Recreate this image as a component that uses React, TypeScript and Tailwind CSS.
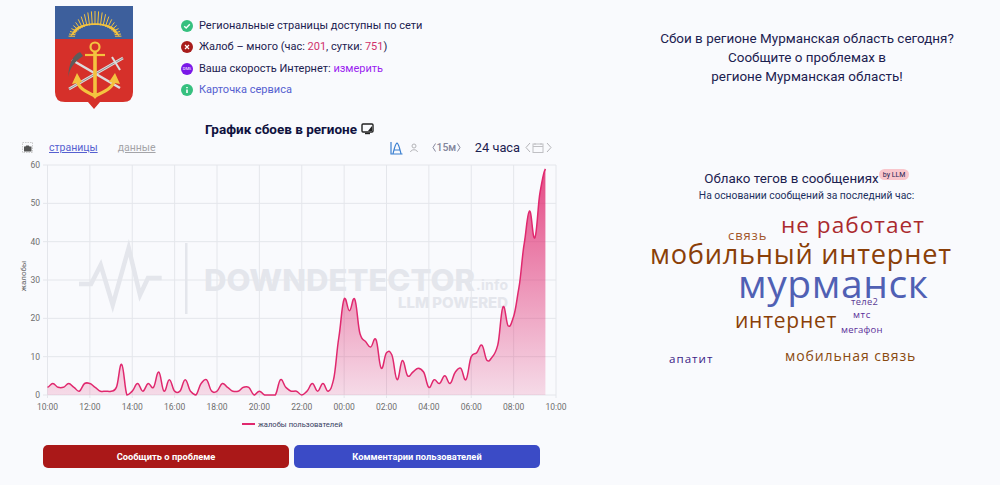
import React from "react";

const data = [
  2, 3, 2, 2, 3, 2, 1, 3, 3, 2, 1, 1, 1, 2, 8, 0, 1, 3, 1, 3, 2, 6, 1, 4, 1, 1, 4, 1, 0, 3, 4, 1, 1, 3, 2, 1, 1, 2, 2, 0, 1, 0, 0, 0,
  4, 2, 1, 1, 0, 1, 3, 1, 3, 1, 4, 15, 25, 22, 25, 16, 14, 12.5, 14.5, 7, 11, 10.5, 4, 9, 5, 6, 7, 6, 2, 4, 3, 5, 3, 6, 7, 4, 10, 11,
  13, 9, 10, 13, 23, 18, 20.5, 28, 39.5, 48, 41, 53, 59,
];

const X0 = 47.5;
const X1 = 556;
const Y0 = 395;
const YT = 165;
const px = (i: number) => X0 + (i * (X1 - X0)) / 96;
const py = (v: number) => Y0 - (v * (Y0 - YT)) / 60;

const buildLine = () => {
  let d = `M${px(0)} ${py(data[0])}`;
  for (let i = 0; i < data.length - 1; i++) {
    const p0 = data[Math.max(i - 1, 0)];
    const p1 = data[i];
    const p2 = data[i + 1];
    const p3 = data[Math.min(i + 2, data.length - 1)];
    const dx = px(1) - px(0);
    const c1 = py(p1 + (p2 - p0) / 6);
    const c2 = py(p2 - (p3 - p1) / 6);
    d += ` C${px(i) + dx / 2.4} ${Math.min(c1, py(0))} ${px(i + 1) - dx / 2.4} ${Math.min(c2, py(0))} ${px(i + 1)} ${py(p2)}`;
  }
  return d;
};

const hours = ["10:00", "12:00", "14:00", "16:00", "18:00", "20:00", "22:00", "00:00", "02:00", "04:00", "06:00", "08:00", "10:00"];

const Chart = () => {
  const line = buildLine();
  return (
    <svg width="590" height="278" viewBox="0 157 590 278" className="block">
      <defs>
        <linearGradient id="fillArea" x1="0" y1="165" x2="0" y2="395" gradientUnits="userSpaceOnUse">
          <stop offset="0" stopColor="#e0286e" stopOpacity="0.85" />
          <stop offset="1" stopColor="#e0286e" stopOpacity="0.15" />
        </linearGradient>
      </defs>

      <g>
        <path d="M79 284H91L100.7 265L112.7 305L128.7 248L140 295L148 278H161.7" fill="none" stroke="#e4e6ec" strokeWidth="4.5" />
        <rect x="185" y="243" width="2.5" height="71" fill="#e4e6ec" />
        <text x="204" y="291" fontSize="30" fontWeight="800" textLength="271" lengthAdjust="spacingAndGlyphs" fill="#e4e6ec" fontFamily="Inter, sans-serif">
          DOWNDETECTOR
        </text>
        <text x="476" y="290" fontSize="14" fontWeight="700" textLength="32" fill="#e4e6ec" fontFamily="Inter, sans-serif">
          .info
        </text>
        <text x="398" y="308" fontSize="15" fontWeight="800" textLength="110" lengthAdjust="spacingAndGlyphs" fill="#e4e6ec" fontFamily="Inter, sans-serif">
          LLM POWERED
        </text>
      </g>

      {[0, 1, 2, 3, 4, 5, 6].map((n) => (
        <g key={n}>
          <line x1={43} x2={556} y1={py(n * 10)} y2={py(n * 10)} stroke="#e4e6eb" />
          <text x={40} y={py(n * 10) + 3} textAnchor="end" fontSize="8.5" fill="#6e6e6e" fontFamily="Roboto, sans-serif">
            {n * 10}
          </text>
        </g>
      ))}
      {hours.map((h, i) => {
        const x = X0 + (i * (X1 - X0)) / 12;
        return (
          <g key={i}>
            <line x1={x} x2={x} y1={165} y2={398} stroke="#e4e6eb" />
            <text x={x} y={410} textAnchor="middle" fontSize="8.5" fill="#6e6e6e" fontFamily="Roboto, sans-serif">
              {h}
            </text>
          </g>
        );
      })}
      <text transform="translate(26 276) rotate(-90)" textAnchor="middle" fontSize="8" fill="#666" fontFamily="Roboto, sans-serif">
        жалобы
      </text>

      <path d={`${line} L${px(94)} ${Y0} L${X0} ${Y0} Z`} fill="url(#fillArea)" />
      <path d={line} fill="none" stroke="#e0286e" strokeWidth="1.5" />

      <line x1={242} x2={255} y1={424} y2={424} stroke="#e0286e" strokeWidth="2" />
      <text x={258} y={426.5} fontSize="7.6" fill="#373d5f" fontFamily="Roboto, sans-serif">
        жалобы пользователей
      </text>
    </svg>
  );
};

const Arms = () => (
  <svg width="78" height="103" viewBox="0 0 78 103" className="block">
    <path d="M0 0H78V33H0Z" fill="#3d5f9c" />
    <path d="M0 33H78V86Q78 96 68 96H45L39 103L33 96H10Q0 96 0 86Z" fill="#d6302a" />
    <g stroke="#f4c33f" strokeWidth="1">
      {Array.from({ length: 23 }).map((_, i) => {
        const a = Math.PI * (1.02 + (i * 0.96) / 22);
        const ry = 13 + 13 * Math.sin((i / 22) * Math.PI);
        return (
          <line
            key={i}
            x1={40 + 20 * Math.cos(a)}
            y1={31 + 12 * Math.sin(a)}
            x2={40 + 26.5 * Math.cos(a)}
            y2={31 + ry * Math.sin(a)}
          />
        );
      })}
    </g>
    <path d="M15 31C21 27 24 19 40 19C56 19 59 27 65 31L61 24C54 15 26 15 19 24Z" fill="#f4c33f" />
    <path d="M17 54L65 82" stroke="#dcdcdc" strokeWidth="2.6" />
    <path d="M68 52L14 83" stroke="#dcdcdc" strokeWidth="2.6" />
    <path d="M14 83L68 52" stroke="#666" strokeWidth="0.6" />
    <path d="M25 46C18 49 14 57 13 71C15 62 19 56 28 50Z" fill="#5c5c5c" />
    <path d="M57 51L65 64" stroke="#dcdcdc" strokeWidth="2" />
    <g fill="none" stroke="#f4c33f">
      <circle cx="40" cy="41" r="4.5" strokeWidth="2.2" />
      <path d="M40 46V90" strokeWidth="3.6" />
      <path d="M30 49H50" strokeWidth="2.2" />
      <path d="M22 73C23 83 32 86 40 90C48 86 58 83 60 73" strokeWidth="3.2" />
    </g>
    <path d="M22 67L17 78L27 76Z M60 67L54 76L65 78Z" fill="#f4c33f" />
    <path d="M35 87L40 93L45 87Z" fill="#f4c33f" />
  </svg>
);

const StatusRow = ({ bg, icon, children }: { bg: string; icon: React.ReactNode; children: React.ReactNode }) => (
  <div className="flex items-center h-[21.5px]">
    <span className={`w-[12px] h-[12px] rounded-full flex items-center justify-center shrink-0 ${bg}`}>{icon}</span>
    <span className="ml-[6px] text-[11px] text-[#1c2150] whitespace-nowrap">{children}</span>
  </div>
);

const cloud = [
  { t: "связь", x: 728, y: 229, s: 13, c: "text-[#a2562a]", ls: "tracking-[0.9px]" },
  { t: "не работает", x: 781, y: 214, s: 22.6, c: "text-[#ab2a2e]", ls: "tracking-[1px]" },
  { t: "мобильный интернет", x: 650, y: 240, s: 27.2, c: "text-[#8a3f08]", ls: "tracking-[0.75px]" },
  { t: "мурманск", x: 738, y: 263, s: 39, c: "text-[#5060b4]", ls: "tracking-[0.6px]" },
  { t: "теле2", x: 851, y: 297, s: 9.4, c: "text-[#5b3a94]", ls: "tracking-[0.3px]" },
  { t: "мтс", x: 853, y: 310, s: 9.5, c: "text-[#5b2f9a]", ls: "tracking-[0.6px]" },
  { t: "мегафон", x: 841, y: 325, s: 9.5, c: "text-[#5b2f9a]", ls: "tracking-[0.2px]" },
  { t: "интернет", x: 735, y: 310, s: 21, c: "text-[#8a3f08]", ls: "tracking-[0.75px]" },
  { t: "апатит", x: 669, y: 353, s: 11.6, c: "text-[#3c1d86]", ls: "tracking-[1px]" },
  { t: "мобильная связь", x: 785, y: 349, s: 14, c: "text-[#8a4a10]", ls: "tracking-[0.9px]" },
];

export default function App() {
  return (
    <div className="relative w-[1000px] h-[485px] overflow-hidden bg-[#f9fafd] flex font-['Roboto',sans-serif]">
      <div className="w-[590px] shrink-0">
        <div className="flex pl-[55px] pt-[6px] h-[110px]">
          <Arms />
          <div className="ml-[48px] pt-[9px]">
            <StatusRow
              bg="bg-[#36c07f]"
              icon={
                <svg width="8" height="8" viewBox="0 0 8 8">
                  <path d="M1.2 4.2L3.2 6L6.8 2.2" fill="none" stroke="#fff" strokeWidth="1.4" />
                </svg>
              }
            >
              Региональные страницы доступны по сети
            </StatusRow>
            <StatusRow
              bg="bg-[#a81c1c]"
              icon={
                <svg width="8" height="8" viewBox="0 0 8 8">
                  <path d="M2 2L6 6M6 2L2 6" fill="none" stroke="#fff" strokeWidth="1.2" />
                </svg>
              }
            >
              Жалоб – много (час: <span className="text-[#d0306a]">201</span>, сутки: <span className="text-[#d0306a]">751</span>)
            </StatusRow>
            <StatusRow bg="bg-[#7a18e8]" icon={<span className="text-[4px] leading-none text-white">DMS</span>}>
              Ваша скорость Интернет: <span className="text-[#9a1ef0]">измерить</span>
            </StatusRow>
            <StatusRow
              bg="bg-[#36c07f]"
              icon={
                <svg width="8" height="8" viewBox="0 0 8 8">
                  <path d="M4 1V2.3M4 3.4V7" fill="none" stroke="#fff" strokeWidth="1.6" />
                </svg>
              }
            >
              <span className="text-[#5560d0]">Карточка сервиса</span>
            </StatusRow>
          </div>
        </div>

        <div className="flex justify-center items-center pr-[11px] h-[22px] mt-[8px] text-[13.5px] font-bold text-[#10123f]">
          <span>График сбоев в регионе</span>
          <svg width="13" height="12" viewBox="0 0 13 12" className="ml-[4px]">
            <rect x="1" y="1" width="11" height="8" rx="1" fill="none" stroke="#222" strokeWidth="1.4" />
            <path d="M4 10.5H9" stroke="#222" strokeWidth="1.4" />
            <path d="M7 8L11 3V8Z" fill="#222" />
          </svg>
        </div>

        <div className="flex items-center h-[19px] mt-[-2px] pl-[22px] pr-[38px]">
          <svg width="11" height="11" viewBox="0 0 11 11">
            <rect x="0.5" y="0.5" width="10" height="10" fill="none" stroke="#aaa" strokeWidth="0.6" strokeDasharray="1.5 1" />
            <path d="M2 4.5H3.5L4.2 3.5H6.8L7.5 4.5H9.5V9.5H2Z" fill="#555" />
          </svg>
          <span className="ml-[16px] text-[10.5px] text-[#5560d0] underline">страницы</span>
          <span className="ml-[20px] text-[10.5px] text-[#a4a4a8] underline">данные</span>
          <div className="ml-auto flex items-center">
            <svg width="13" height="14" viewBox="0 0 13 14">
              <path d="M1 1V13H12.5M3 13C4 9 5 3 7 2C9 3 10 9 11 13M3.5 9H10.5" fill="none" stroke="#3a7fd0" strokeWidth="1.2" />
            </svg>
            <svg width="10" height="10" viewBox="0 0 10 10" className="ml-[6px]">
              <circle cx="5" cy="3" r="2" fill="none" stroke="#b4b4b8" />
              <path d="M1.5 9C2 6 8 6 8.5 9" fill="none" stroke="#b4b4b8" />
            </svg>
            <div className="ml-[13px] w-[29px] flex items-center justify-between">
              <svg width="4" height="9" viewBox="0 0 4 9">
                <path d="M3.5 0.5L1 4.5L3.5 8.5" fill="none" stroke="#84869c" />
              </svg>
              <span className="text-[10.5px] font-medium text-[#84869c]">15м</span>
              <svg width="4" height="9" viewBox="0 0 4 9">
                <path d="M0.5 0.5L3 4.5L0.5 8.5" fill="none" stroke="#84869c" />
              </svg>
            </div>
            <span className="ml-[14px] text-[12.8px] text-[#1c2150]">24 часа</span>
            <svg width="27" height="11" viewBox="0 0 27 11" className="ml-[5px]">
              <path d="M5 1L1 5.5L5 10M22 1L26 5.5L22 10" fill="none" stroke="#b4b4b8" strokeWidth="1" />
              <rect x="8" y="2" width="10" height="8.5" fill="none" stroke="#c0c0c4" />
              <path d="M8 4.5H18M10 1V3M16 1V3" stroke="#c0c0c4" />
            </svg>
          </div>
        </div>

        <Chart />

        <div className="flex ml-[43px] gap-[5px] mt-[10px]">
          <button className="w-[246px] h-[23px] rounded-[5px] bg-[#aa1818] text-white text-[9.3px] font-bold">Сообщить о проблеме</button>
          <button className="w-[246px] h-[23px] rounded-[5px] bg-[#3b4bc6] text-white text-[9.3px] font-bold">Комментарии пользователей</button>
        </div>
      </div>

      <div className="flex-1 text-[#1c2150]">
        <div className="mt-[29px] text-center text-[13.45px] leading-[19px] w-[434px]">
          <p>Сбои в регионе Мурманская область сегодня?</p>
          <p>Сообщите о проблемах в</p>
          <p>регионе Мурманская область!</p>
        </div>
        <div className="mt-[84px] w-[434px] flex flex-col items-center">
          <div className="text-[13.35px] leading-[18px] relative ml-[-31px]">
            Облако тегов в сообщениях
            <span className="absolute left-full top-[-1px] rounded-full bg-[#f9c6cc] px-[4px] h-[11px] flex items-center text-[7px] whitespace-nowrap">by LLM</span>
          </div>
          <div className="text-[10.3px] leading-[16px] text-[#1c3060] ml-[-1px]">На основании сообщений за последний час:</div>
        </div>
      </div>

      {cloud.map((w) => (
        <span
          key={w.t}
          className={`absolute leading-none whitespace-nowrap font-['Open_Sans',sans-serif] ${w.c} ${w.ls}`}
          style={{ left: w.x, top: w.y, fontSize: w.s }}
        >
          {w.t}
        </span>
      ))}
    </div>
  );
}
